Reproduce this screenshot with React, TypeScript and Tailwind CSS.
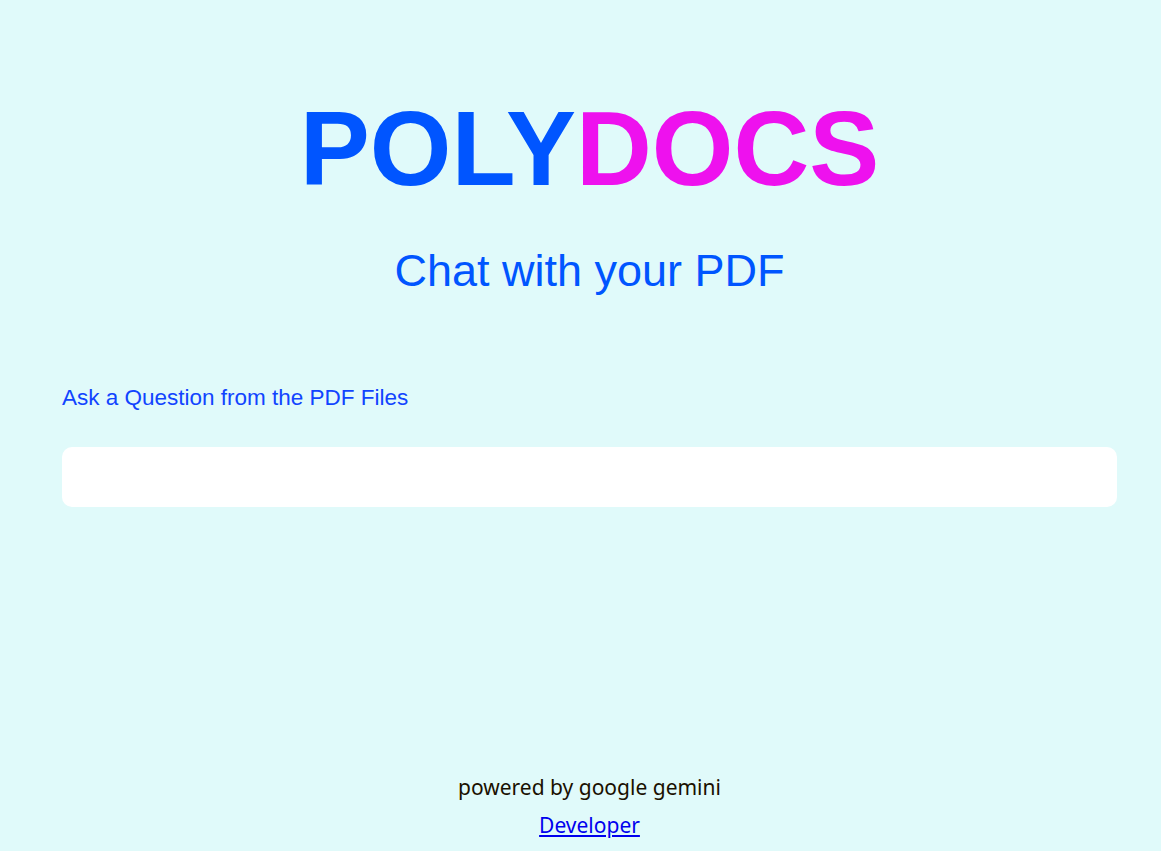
export default function App() {
  return (
    <div className="min-h-[851px] w-full bg-[#e0fafa] flex flex-col">
      <div className="ml-[62px] w-[1055px] flex flex-col">
        {/* title */}
        <h1 className="mt-[89px] text-center font-bold text-[105px] leading-[120px] font-['Liberation_Sans',Arial,sans-serif]">
          <span className="text-[#0055ff]">POLY</span>
          <span className="text-[#ee11ee]">DOCS</span>
        </h1>
        <h2 className="mt-[34px] text-center text-[45px] leading-[56px] text-[#0055ff] font-['Liberation_Sans',Arial,sans-serif]">
          Chat with your PDF
        </h2>
        <label className="mt-[85px] text-[22.5px] leading-[28px] text-[#1144ff] font-['Liberation_Sans',Arial,sans-serif]">
          Ask a Question from the PDF Files
        </label>
        <input
          type="text"
          className="mt-[35px] h-[60px] w-full bg-white rounded-[10px] outline-none px-4"
        />
      </div>
      <div className="mt-auto flex flex-col items-center pb-[7px] ml-[18px] font-['Source_Sans_Pro','Noto_Sans',sans-serif]">
        <p className="text-[21px] leading-[38px] text-[#1a1000]">powered by google gemini</p>
        <a href="#" className="text-[21px] leading-[38px] text-[#0000ee] underline">
          Developer
        </a>
      </div>
    </div>
  );
}
